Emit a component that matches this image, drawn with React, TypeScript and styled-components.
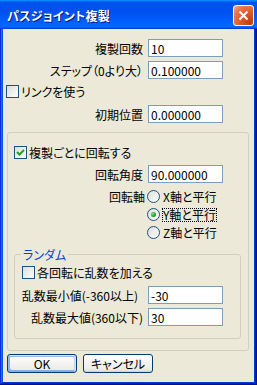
import styled, { createGlobalStyle } from "styled-components";

const GlobalStyle = createGlobalStyle`
  html, body {
    margin: 0;
    padding: 0;
    background: #ffffff;
  }
  body {
    font-family: "Noto Sans CJK JP", "Noto Sans", sans-serif;
    font-size: 12px;
    font-feature-settings: "palt";
    color: #000000;
  }
`;

const Window = styled.div`
  width: 257px;
  height: 385px;
  display: flex;
  flex-direction: column;
`;

const TitleBar = styled.div`
  height: 29px;
  flex: none;
  display: flex;
  align-items: center;
  justify-content: space-between;
  padding: 0 3px 0 7px;
  box-sizing: border-box;
  background: linear-gradient(
    180deg,
    #0997ff 0%,
    #0053ee 8%,
    #0050ee 40%,
    #0066ff 88%,
    #0066ff 93%,
    #005bff 95%,
    #003dd7 96%,
    #003dd7 100%
  );
`;

const Title = styled.span`
  color: #ffffff;
  font-weight: bold;
  font-size: 12px;
  line-height: 13px;
  letter-spacing: 0.3px;
  text-shadow: 1px 1px #0f1089;
  margin-top: 2px;
`;

const CloseButton = styled.div`
  width: 21px;
  height: 21px;
  box-sizing: border-box;
  border: 1px solid #ffffff;
  border-radius: 3px;
  margin-top: 2px;
  display: flex;
  align-items: center;
  justify-content: center;
  background: radial-gradient(
    circle at 85% 85%,
    #c33a10 0%,
    #dd5a2c 45%,
    #e77a52 75%,
    #f4b197 100%
  );
`;

const Frame = styled.div`
  flex: 1;
  display: flex;
  padding: 0 3px 3px;
  background: #0055e5;
  box-shadow: inset -1px -1px #00138c, inset 1px 0 #0831d9,
    inset -2px -2px #001ea0, inset 2px 0 #166aee, inset -3px -3px #003bda,
    inset 3px 0 #0855dd;
`;

const Client = styled.div`
  flex: 1;
  display: flex;
  flex-direction: column;
  padding-top: 10px;
  background: #ece9d8;
`;

const FieldRow = styled.div<{ $labelWidth: number; $top: number }>`
  display: grid;
  grid-template-columns: ${(p) => p.$labelWidth}px 75px;
  column-gap: 5px;
  align-items: center;
  height: 18px;
  margin-top: ${(p) => p.$top}px;
`;

const Label = styled.span<{ $inset?: number }>`
  text-align: right;
  white-space: nowrap;
  line-height: 13px;
  padding-right: ${(p) => p.$inset ?? 0}px;
`;

const Edit = styled.input`
  box-sizing: border-box;
  width: 75px;
  height: 18px;
  margin: 0;
  padding: 0 0 0 2px;
  border: 1px solid #7f9db9;
  border-radius: 0;
  background: #ffffff;
  color: #000000;
  font-family: "Noto Sans CJK JP", sans-serif;
  font-size: 12px;
  outline: none;
`;

const CheckRow = styled.div<{ $left: number; $top: number }>`
  display: flex;
  align-items: center;
  gap: 2px;
  height: 13px;
  line-height: 13px;
  margin: ${(p) => p.$top}px 0 0 ${(p) => p.$left}px;
  white-space: nowrap;
`;

const CheckBox = styled.span`
  width: 13px;
  height: 13px;
  box-sizing: border-box;
  border: 1px solid #1c5180;
  background: linear-gradient(135deg, #dcdcd7, #ffffff);
  display: flex;
  align-items: center;
  justify-content: center;
  flex: none;
`;

const Group = styled.fieldset<{ $margin: string; $pad: string }>`
  margin: ${(p) => p.$margin};
  padding: ${(p) => p.$pad};
  border: 1px solid #d0d0bf;
  border-radius: 3px;
  min-width: 0;
`;

const Legend = styled.legend`
  color: #0046d5;
  line-height: 13px;
  padding: 0 2px;
  margin-left: 6px;
`;

const AxisRow = styled.div<{ $labelWidth: number }>`
  display: grid;
  grid-template-columns: ${(p) => p.$labelWidth}px auto;
  column-gap: 2px;
  align-items: start;
  margin-top: 7px;
`;

const RadioList = styled.div`
  display: flex;
  flex-direction: column;
  gap: 5px;
`;

const RadioItem = styled.div`
  display: flex;
  align-items: center;
  gap: 3px;
  height: 13px;
`;

const RadioCircle = styled.span<{ $checked?: boolean }>`
  width: 13px;
  height: 13px;
  box-sizing: border-box;
  border: 1px solid #1c5180;
  border-radius: 50%;
  background: linear-gradient(135deg, #dcdcd7, #ffffff);
  display: flex;
  align-items: center;
  justify-content: center;
  flex: none;

  &::after {
    content: "";
    display: ${(p) => (p.$checked ? "block" : "none")};
    width: 5px;
    height: 5px;
    border-radius: 50%;
    background: radial-gradient(circle at 35% 35%, #7be07a, #21a121 60%, #0a7a0a);
  }
`;

const RadioText = styled.span<{ $focus?: boolean }>`
  line-height: 12px;
  white-space: nowrap;
  outline: ${(p) => (p.$focus ? "1px dotted #000000" : "none")};
`;

const ButtonRow = styled.div`
  display: flex;
  gap: 6px;
  margin: 3px 0 0 4px;
`;

const Button = styled.div<{ $default?: boolean }>`
  width: 70px;
  height: 19px;
  box-sizing: border-box;
  border: 1px solid #003c74;
  border-radius: 3px;
  background: linear-gradient(180deg, #ffffff, #ecebe6 86%, #d6d0c5);
  display: flex;
  align-items: center;
  justify-content: center;
  line-height: 12px;
  box-shadow: ${(p) =>
    p.$default
      ? "inset -1px 1px #cee7ff, inset 1px 2px #98b8ea, inset -2px 2px #bcd4f6, inset 1px -1px #89ade4, inset 2px -2px #89ade4"
      : "none"};
`;

const CheckMark = () => (
  <svg width="9" height="9" viewBox="0 0 9 9">
    <path d="M1 4 L3.5 6.5 L8 2" fill="none" stroke="#21a121" strokeWidth="2" />
  </svg>
);

const CloseIcon = () => (
  <svg width="11" height="11" viewBox="0 0 11 11">
    <path d="M1.5 1.5 L9.5 9.5 M9.5 1.5 L1.5 9.5" stroke="#ffffff" strokeWidth="2" />
  </svg>
);

const App = () => {
  return (
    <>
      <GlobalStyle />
      <Window>
        <TitleBar>
          <Title>パスジョイント複製</Title>
          <CloseButton>
            <CloseIcon />
          </CloseButton>
        </TitleBar>
        <Frame>
          <Client>
            <FieldRow $labelWidth={140} $top={0}>
              <Label>複製回数</Label>
              <Edit readOnly defaultValue="10" />
            </FieldRow>
            <FieldRow $labelWidth={140} $top={4}>
              <Label>ステップ（0より大）</Label>
              <Edit readOnly defaultValue="0.100000" />
            </FieldRow>
            <CheckRow $left={3} $top={6}>
              <CheckBox />
              <span>リンクを使う</span>
            </CheckRow>
            <FieldRow $labelWidth={140} $top={7}>
              <Label>初期位置</Label>
              <Edit readOnly defaultValue="0.000000" />
            </FieldRow>

            <Group $margin="9px 5px 0 4px" $pad="13px 7px 11px 6px">
              <CheckRow $left={0} $top={0}>
                <CheckBox>
                  <CheckMark />
                </CheckBox>
                <span>複製ごとに回転する</span>
              </CheckRow>
              <FieldRow $labelWidth={129} $top={6}>
                <Label>回転角度</Label>
                <Edit readOnly defaultValue="90.000000" />
              </FieldRow>
              <AxisRow $labelWidth={131}>
                <Label>回転軸</Label>
                <RadioList>
                  <RadioItem>
                    <RadioCircle />
                    <RadioText>X軸と平行</RadioText>
                  </RadioItem>
                  <RadioItem>
                    <RadioCircle $checked />
                    <RadioText $focus>Y軸と平行</RadioText>
                  </RadioItem>
                  <RadioItem>
                    <RadioCircle />
                    <RadioText>Z軸と平行</RadioText>
                  </RadioItem>
                </RadioList>
              </AxisRow>

              <Group $margin="9px 0 0" $pad="5px 0 12px 0">
                <Legend>ランダム</Legend>
                <CheckRow $left={7} $top={0}>
                  <CheckBox />
                  <span>各回転に乱数を加える</span>
                </CheckRow>
                <FieldRow $labelWidth={128} $top={7}>
                  <Label $inset={5}>乱数最小値(-360以上)</Label>
                  <Edit readOnly defaultValue="-30" />
                </FieldRow>
                <FieldRow $labelWidth={128} $top={4}>
                  <Label>乱数最大値(360以下)</Label>
                  <Edit readOnly defaultValue="30" />
                </FieldRow>
              </Group>
            </Group>

            <ButtonRow>
              <Button $default>OK</Button>
              <Button>キャンセル</Button>
            </ButtonRow>
          </Client>
        </Frame>
      </Window>
    </>
  );
};

export default App;
